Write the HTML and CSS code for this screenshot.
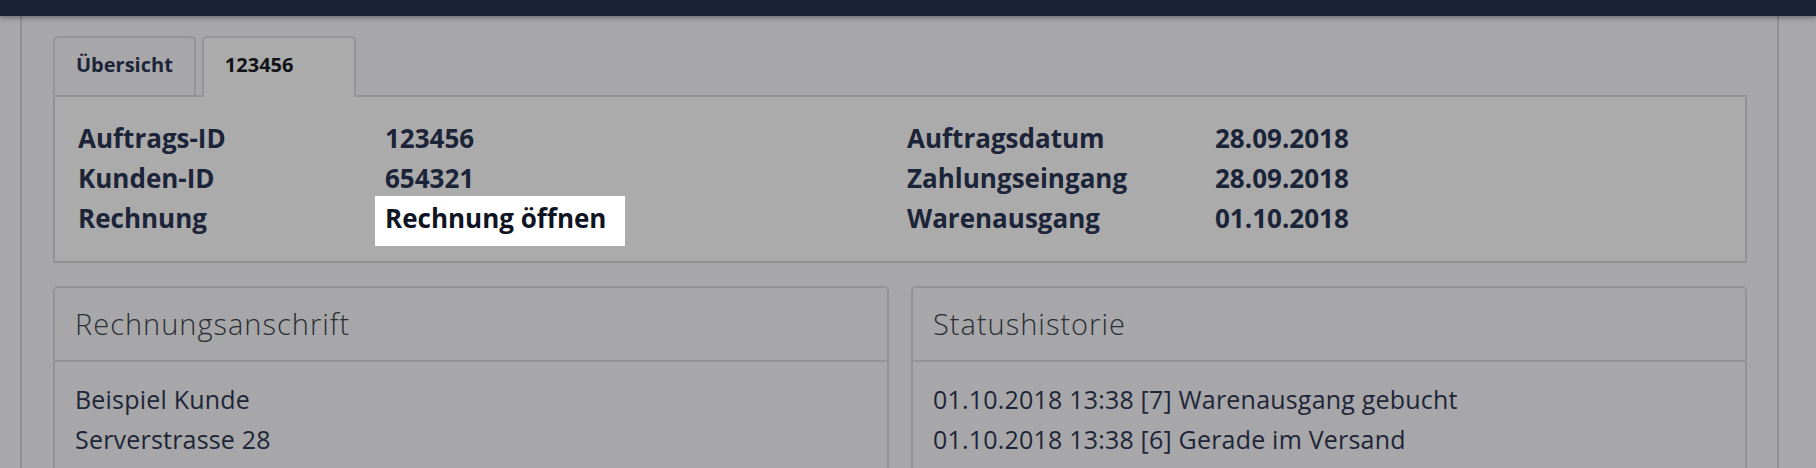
FILE: index.html
```html
<!DOCTYPE html>
<html lang="de">
<head>
<meta charset="utf-8">
<title>Auftrag 123456</title>
<link rel="stylesheet" href="styles.css">
</head>
<body>
<header class="topbar"></header>
<main class="page">
  <nav class="tabs">
    <div class="tab">Übersicht</div>
    <div class="tab tab-active">123456</div>
  </nav>
  <section class="summary">
    <div class="summary-grid">
      <div class="label">Auftrags-ID</div>
      <div class="value">123456</div>
      <div class="label">Auftragsdatum</div>
      <div class="value">28.09.2018</div>
      <div class="label">Kunden-ID</div>
      <div class="value">654321</div>
      <div class="label">Zahlungseingang</div>
      <div class="value">28.09.2018</div>
      <div class="label">Rechnung</div>
      <div class="value"><span class="highlight">Rechnung öffnen</span></div>
      <div class="label">Warenausgang</div>
      <div class="value">01.10.2018</div>
    </div>
  </section>
  <div class="cards">
    <section class="card">
      <h2 class="card-title">Rechnungsanschrift</h2>
      <div class="card-body">
        <div>Beispiel Kunde</div>
        <div>Serverstrasse 28</div>
        <div>12345 Beispielstadt</div>
      </div>
    </section>
    <section class="card">
      <h2 class="card-title">Statushistorie</h2>
      <div class="card-body">
        <div>01.10.2018 13:38 [7] Warenausgang gebucht</div>
        <div>01.10.2018 13:38 [6] Gerade im Versand</div>
        <div>28.09.2018 10:12 [5] Zahlung eingegangen</div>
      </div>
    </section>
  </div>
</main>
</body>
</html>
```

FILE: styles.css
```css
html, body {
  margin: 0;
  padding: 0;
  overflow: hidden;
}
body {
  background: #a8a8aa;
  font-family: "Open Sans", "Noto Sans", sans-serif;
  color: #1b2438;
}
.topbar {
  position: relative;
  z-index: 2;
  height: 16px;
  background: #1a2236;
  box-shadow: 0 2px 5px rgba(40, 40, 45, 0.45);
}
.page {
  margin: 0 37px 0 20px;
  min-height: 100vh;
  border-left: 2px solid #909092;
  border-right: 2px solid #909092;
  background: #a7a7a9;
  padding: 20px 30px 0 31px;
  box-sizing: border-box;
}
.tabs {
  display: flex;
  gap: 6px;
  align-items: flex-end;
}
.tab {
  height: 57px;
  line-height: 53px;
  padding: 0 21px;
  border: 2px solid #959597;
  border-bottom: none;
  border-radius: 5px 5px 0 0;
  font-size: 20px;
  font-weight: 700;
  color: #1b2438;
  background: #a7a7a9;
}
.tab-active {
  width: 108px;
  color: #111318;
  background: #ababab;
  position: relative;
  margin-bottom: -2px;
  height: 59px;
}
.summary {
  border: 2px solid #929294;
  background: #ababab;
  padding: 21px 20px 23px 23px;
}
.summary-grid {
  display: grid;
  grid-template-columns: 307px 522px 308px auto;
  line-height: 40px;
  font-size: 26px;
  font-weight: 700;
}
.highlight {
  display: inline-block;
  background: #ffffff;
  color: #0e1422;
  line-height: 44px;
  padding: 0 19px 6px 10px;
  margin: -2px 0 -8px -10px;
}
.cards {
  display: grid;
  grid-template-columns: 1fr 1fr;
  gap: 22px;
  margin-top: 23px;
}
.card {
  border: 2px solid #939395;
  border-radius: 5px;
  background: #a7a7a9;
}
.card-title {
  margin: 0;
  padding: 0 20px;
  height: 72px;
  line-height: 72px;
  font-size: 29px;
  letter-spacing: 1px;
  font-weight: 300;
  color: #2b2e35;
  border-bottom: 2px solid #939395;
}
.card-body {
  padding: 18px 20px 20px;
  font-size: 25px;
  letter-spacing: 0.2px;
  line-height: 39.5px;
  color: #1e2537;
}
```
